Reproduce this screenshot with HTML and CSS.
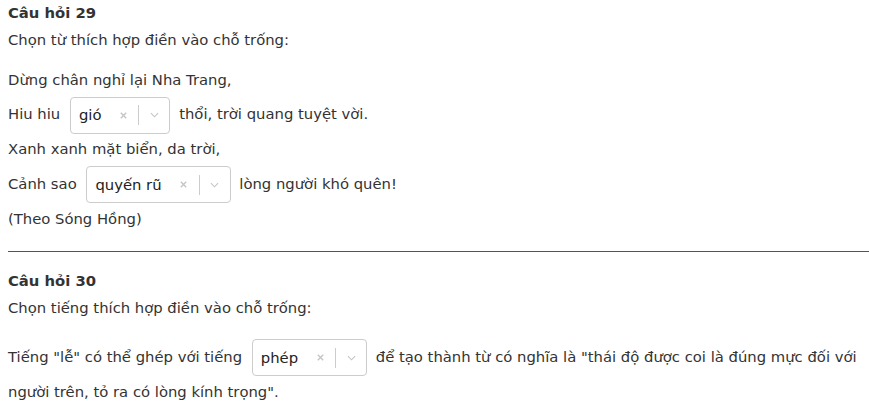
FILE: index.html
```html
<!DOCTYPE html>
<html lang="vi">
<head>
<meta charset="utf-8">
<link rel="stylesheet" href="styles.css">
</head>
<body>
<div class="question">
  <div class="q-title">Câu hỏi 29</div>
  <div class="q-prompt">Chọn từ thích hợp điền vào chỗ trống:</div>
  <div class="q-body">
    <div class="line">Dừng chân nghỉ lại Nha Trang,</div>
    <div class="line">Hiu hiu <span class="select"><span class="value">gió</span><span class="clear"><svg viewBox="0 0 10 10" width="9" height="9"><path d="M2 2L8 8M8 2L2 8" /></svg></span><span class="sep"></span><span class="drop"><svg viewBox="0 0 10 6" width="9" height="6"><path d="M1 1L5 5L9 1" /></svg></span></span> thổi, trời quang tuyệt vời.</div>
    <div class="line">Xanh xanh mặt biển, da trời,</div>
    <div class="line">Cảnh sao <span class="select"><span class="value">quyến rũ</span><span class="clear"><svg viewBox="0 0 10 10" width="9" height="9"><path d="M2 2L8 8M8 2L2 8" /></svg></span><span class="sep"></span><span class="drop"><svg viewBox="0 0 10 6" width="9" height="6"><path d="M1 1L5 5L9 1" /></svg></span></span> lòng người khó quên!</div>
    <div class="line">(Theo Sóng Hồng)</div>
  </div>
</div>
<hr class="divider">
<div class="question">
  <div class="q-title">Câu hỏi 30</div>
  <div class="q-prompt">Chọn tiếng thích hợp điền vào chỗ trống:</div>
  <div class="q-body q-body-long">
    <div class="line">Tiếng "lễ" có thể ghép với tiếng <span class="select"><span class="value">phép</span><span class="clear"><svg viewBox="0 0 10 10" width="9" height="9"><path d="M2 2L8 8M8 2L2 8" /></svg></span><span class="sep"></span><span class="drop"><svg viewBox="0 0 10 6" width="9" height="6"><path d="M1 1L5 5L9 1" /></svg></span></span> <span>để tạo thành từ có nghĩa là "thái độ được coi là đúng mực đối với</span> <span>người trên, tỏ ra có lòng kính trọng".</span></div>
  </div>
</div>
</body>
</html>
```
FILE: styles.css
```css
html, body {
  background: #fff;
}
body {
  margin: 0;
  padding: 2px 0 0 8px;
  font-family: "DejaVu Sans", Verdana, sans-serif;
  font-size: 14.8px;
  color: #333;
}
.q-title {
  font-weight: bold;
  line-height: 22px;
}
.q-prompt {
  margin-top: 4px;
  line-height: 24px;
}
.q-body {
  margin-top: 10.75px;
}
.q-body-long {
  margin-top: 19.5px;
}
.line {
  line-height: 34.5px;
}
.select {
  display: inline-flex;
  align-items: center;
  vertical-align: middle;
  height: 37px;
  margin: -1.5px 4px -1.5px 5px;
  border: 1px solid #ccc;
  border-radius: 4px;
  background: #fff;
  box-sizing: border-box;
  color: #222;
}
.value {
  padding: 0 7px 0 8px;
  line-height: 20px;
}
.clear, .drop {
  display: inline-flex;
  align-items: center;
  justify-content: center;
  width: 30px;
  height: 100%;
}
.clear svg path {
  stroke: #c4c4c4;
  stroke-width: 1.5;
  fill: none;
}
.drop svg path {
  stroke: #c4c4c4;
  stroke-width: 1.2;
  fill: none;
}
.sep {
  width: 1px;
  height: 20px;
  background: #ccc;
}
.divider {
  border: 0;
  border-top: 1px solid #555;
  margin: 14.75px 0 18px 0;
}
```
